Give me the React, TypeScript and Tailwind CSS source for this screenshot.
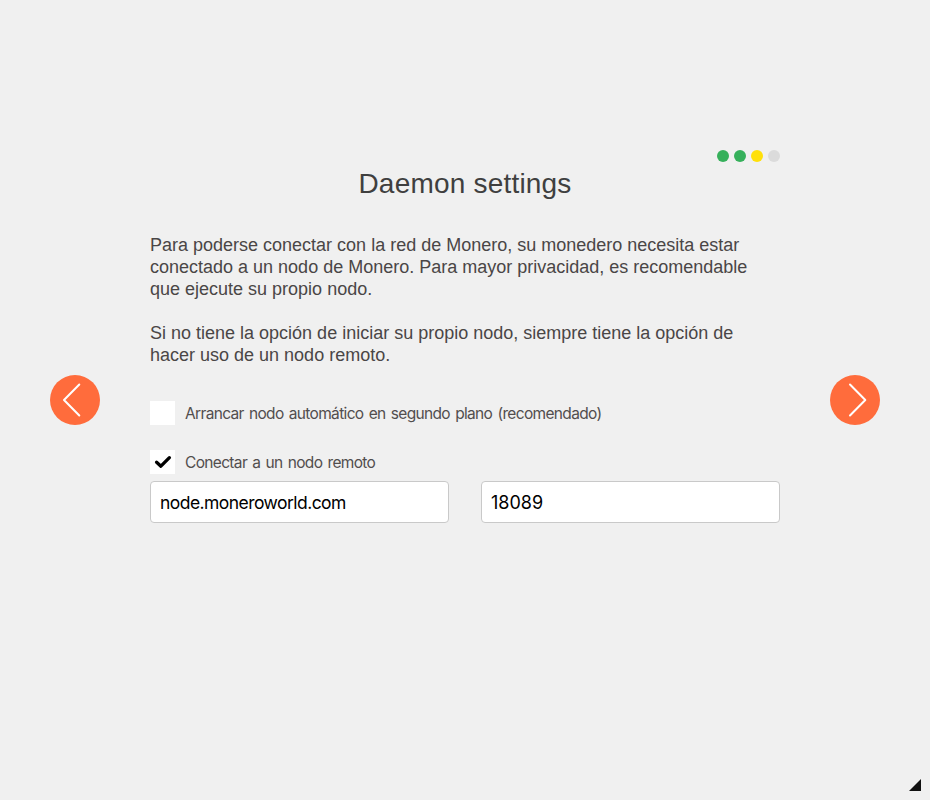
import React from "react";

const paragraphLines = [
  "Para poderse conectar con la red de Monero, su monedero necesita estar",
  "conectado a un nodo de Monero. Para mayor privacidad, es recomendable",
  "que ejecute su propio nodo.",
  "",
  "Si no tiene la opción de iniciar su propio nodo, siempre tiene la opción de",
  "hacer uso de un nodo remoto.",
];

function NavButton({ points }: { points: string }) {
  return (
    <button className="h-[50px] w-[50px] shrink-0 rounded-full bg-[#ff6c3c]">
      <svg width="50" height="50" viewBox="0 0 50 50" fill="none" stroke="#fff" strokeWidth="2" strokeLinecap="round" strokeLinejoin="round">
        <polyline points={points} />
      </svg>
    </button>
  );
}

function CheckRow({ label, checked }: { label: string; checked: boolean }) {
  return (
    <div className="flex h-6 items-center gap-[10px]">
      <span className="h-6 w-[25px] bg-white">
        {checked && (
          <svg width="25" height="24" viewBox="0 0 25 24" fill="none" stroke="#000" strokeWidth="3.3" strokeLinecap="round" strokeLinejoin="round">
            <path d="M6.6 12.2 10.9 16.2 19.4 7.7" />
          </svg>
        )}
      </span>
      <span className="whitespace-nowrap pt-[2px] font-[Inter,sans-serif] text-[15.5px] leading-6 tracking-[-0.66px] [word-spacing:1.5px] text-[#524e4e]">{label}</span>
    </div>
  );
}

export default function App() {
  return (
    <main className="flex h-[800px] w-[930px] flex-col overflow-hidden bg-[#f0f0f0] font-['Liberation_Sans',Arial,sans-serif]">
      <div className="flex h-[770px] items-start justify-between px-[50px]">
        <div className="pt-[375px]"><NavButton points="29.3,9.5 14,25 29.3,40.5" /></div>
        <section className="flex w-[630px] flex-col pt-[150px]">
          <div className="flex h-3 justify-end gap-[5px]">
            <span className="h-3 w-3 rounded-full bg-[#36b05b]" />
            <span className="h-3 w-3 rounded-full bg-[#36b05b]" />
            <span className="h-3 w-3 rounded-full bg-[#ffe00a]" />
            <span className="h-3 w-3 rounded-full bg-[#dbdbdb]" />
          </div>
          <h1 className="mt-[6px] text-center text-[28px] leading-8 tracking-[0.2px] text-[#3f3f3f]">Daemon settings</h1>
          <div className="mt-[34px] text-[18px] leading-[22px] text-[#4a4646]">
            {paragraphLines.map((line, i) => <p key={i} className="h-[22px] whitespace-nowrap">{line}</p>)}
          </div>
          <div className="mt-[35px] flex flex-col gap-[25px]">
            <CheckRow label="Arrancar nodo automático en segundo plano (recomendado)" checked={false} />
            <CheckRow label="Conectar a un nodo remoto" checked />
          </div>
          <div className="mt-[7px] flex justify-between">
            <input className="h-[42px] w-[299px] rounded-[4px] border border-[#c9c9c9] bg-white px-[9px] font-[Inter,sans-serif] text-[17.5px] tracking-[-0.55px] text-black" defaultValue="node.moneroworld.com" />
            <input className="h-[42px] w-[299px] rounded-[4px] border border-[#c9c9c9] bg-white px-[9px] font-[Inter,sans-serif] text-[18px] text-black" defaultValue="18089" />
          </div>
        </section>
        <div className="pt-[375px]"><NavButton points="20,9.5 35.3,25 20,40.5" /></div>
      </div>
      <div className="flex justify-end pr-[9px] pt-[9px]">
        <svg width="12" height="12" viewBox="0 0 12 12"><path d="M12 0V12H0Z" fill="#111" /></svg>
      </div>
    </main>
  );
}
